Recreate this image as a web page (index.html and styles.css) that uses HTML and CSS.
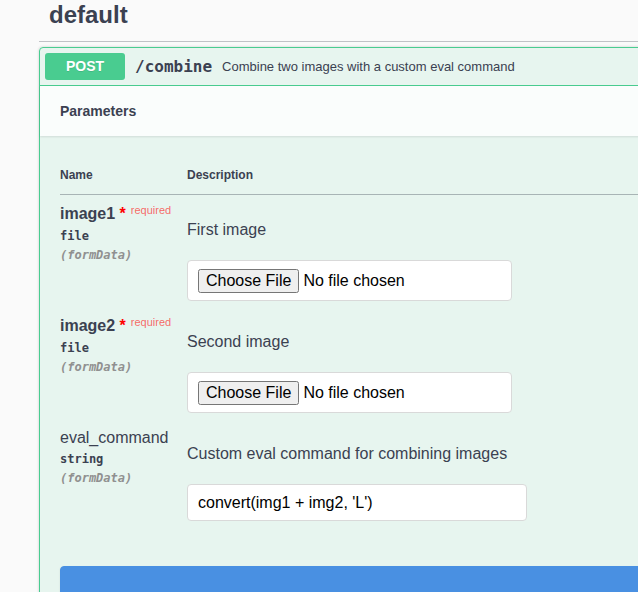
FILE: index.html
```html
<!DOCTYPE html>
<html>
<head>
<meta charset="utf-8">
<link rel="stylesheet" href="styles.css">
</head>
<body>
<div class="wrap">
  <h4 class="tag">default</h4>
  <div class="opblock">
    <div class="summary">
      <span class="method">POST</span>
      <span class="path">/combine</span>
      <span class="summary-desc">Combine two images with a custom eval command</span>
    </div>
    <div class="section-header"><h4>Parameters</h4></div>
    <div class="table-container">
      <table class="params">
        <thead>
          <tr><td class="col-name">Name</td><td>Description</td></tr>
        </thead>
        <tbody>
          <tr>
            <td class="col-name">
              <div class="pname req">image1<span class="star">&nbsp;*</span><span class="required">required</span></div>
              <div class="ptype">file</div>
              <div class="pin">(formData)</div>
            </td>
            <td class="col-desc">
              <p>First image</p>
              <input class="file" type="file">
            </td>
          </tr>
          <tr>
            <td class="col-name">
              <div class="pname req">image2<span class="star">&nbsp;*</span><span class="required">required</span></div>
              <div class="ptype">file</div>
              <div class="pin">(formData)</div>
            </td>
            <td class="col-desc">
              <p>Second image</p>
              <input class="file" type="file">
            </td>
          </tr>
          <tr>
            <td class="col-name">
              <div class="pname">eval_command</div>
              <div class="ptype">string</div>
              <div class="pin">(formData)</div>
            </td>
            <td class="col-desc">
              <p>Custom eval command for combining images</p>
              <input class="text" type="text" value="convert(img1 + img2, 'L')">
            </td>
          </tr>
        </tbody>
      </table>
    </div>
    <div class="execute-wrapper">
      <button class="execute"></button>
    </div>
  </div>
</div>
</body>
</html>
```

FILE: styles.css
```css
html, body {
  margin: 0;
  padding: 0;
  overflow: hidden;
  background: #fafafa;
  font-family: "Liberation Sans", Arial, sans-serif;
  color: #3b4151;
}

.wrap {
  width: 900px;
  margin-left: 39px;
}

.tag {
  margin: 0 0 5px;
  padding: 1px 10px 12px;
  font-size: 24px;
  line-height: 28px;
  font-weight: 700;
  color: #3b4151;
  border-bottom: 1px solid rgba(59, 65, 81, 0.3);
}

.opblock {
  border: 1px solid #49cc90;
  border-radius: 4px;
  background: rgba(73, 204, 144, 0.1);
  box-shadow: 0 0 3px rgba(0, 0, 0, 0.19);
}

.summary {
  display: flex;
  align-items: center;
  padding: 5px;
  border-bottom: 1px solid #49cc90;
}

.method {
  display: inline-block;
  width: 80px;
  height: 27px;
  line-height: 27px;
  text-align: center;
  background: #49cc90;
  color: #fff;
  font-size: 14px;
  font-weight: 700;
  border-radius: 3px;
  text-shadow: 0 1px 0 rgba(0, 0, 0, 0.1);
}

.path {
  padding: 0 10px;
  font-family: "DejaVu Sans Mono", monospace;
  font-size: 16px;
  font-weight: 700;
  color: #3b4151;
}

.summary-desc {
  font-size: 13px;
  color: #3b4151;
}

.section-header {
  display: flex;
  align-items: center;
  min-height: 50px;
  box-sizing: border-box;
  padding: 8px 20px;
  background: rgba(255, 255, 255, 0.8);
  box-shadow: 0 1px 2px rgba(0, 0, 0, 0.1);
}

.section-header h4 {
  margin: 0;
  font-size: 14px;
  font-weight: 700;
  color: #3b4151;
}

.table-container {
  padding: 20px 20px 20px;
}

.params {
  width: 100%;
  border-collapse: collapse;
}

.params thead td {
  padding: 12px 0 12px;
  font-size: 12px;
  line-height: 14px;
  font-weight: 700;
  color: #3b4151;
  border-bottom: 1px solid rgba(59, 65, 81, 0.2);
}

.col-name {
  width: 127px;
}

.params tbody td {
  vertical-align: top;
  padding: 10px 0 0;
}

.pname {
  font-size: 16px;
  line-height: 18px;
  color: #3b4151;
}

.pname.req {
  font-weight: 700;
}

.star {
  color: red;
  font-size: 16px;
  font-weight: 700;
}

.required {
  font-size: 11px;
  font-weight: 400;
  color: rgba(255, 0, 0, 0.6);
  position: relative;
  top: -5px;
  padding-left: 5px;
}

.ptype {
  padding: 5px 0;
  font-family: "DejaVu Sans Mono", monospace;
  font-size: 12px;
  line-height: 14px;
  font-weight: 700;
  color: #3b4151;
}

.pin {
  font-family: "DejaVu Sans Mono", monospace;
  font-size: 12px;
  line-height: 14px;
  font-style: italic;
  font-weight: 700;
  color: #909090;
}

.col-desc {
  color: #3b4151;
}

.col-desc p {
  margin: 16px 0 21px;
  font-size: 16px;
  line-height: 18px;
  color: #3b4151;
}

.col-desc input {
  display: block;
  margin: 0 0 6px;
  box-sizing: border-box;
  padding: 8px 10px;
  border: 1px solid #d9d9d9;
  border-radius: 4px;
  background: #fff;
  font-family: "Liberation Sans", Arial, sans-serif;
  font-size: 16px;
  color: #000;
}

.col-desc input.file {
  width: 325px;
  height: 41px;
}

.col-desc input.text {
  width: 340px;
  height: 37px;
}

.execute-wrapper {
  padding: 19px 0 20px 20px;
}

.execute {
  display: block;
  width: 100%;
  height: 40px;
  background: #4990e2;
  border: 1px solid #4990e2;
  border-radius: 4px;
  box-shadow: 0 1px 2px rgba(0, 0, 0, 0.1);
}
```
